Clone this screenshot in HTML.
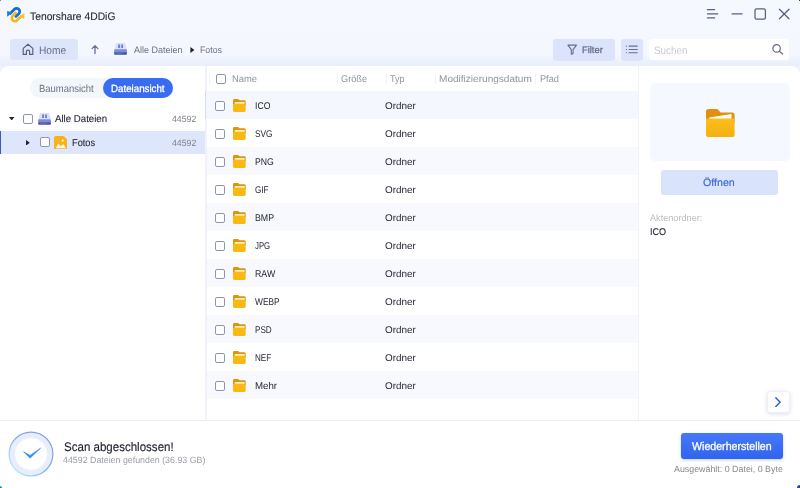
<!DOCTYPE html>
<html><head><meta charset="utf-8">
<style>
*{box-sizing:border-box;margin:0;padding:0}
html,body{width:800px;height:488px;overflow:hidden}
body{background:linear-gradient(#f5f8fe 0,#f4f7fe 54px,#e8eefc 65px,#f0f3fc 67px);font-family:"Liberation Sans",sans-serif;font-size:10px;color:#1f2230;position:relative}
.abs{position:absolute}
.t{position:absolute;white-space:nowrap;line-height:1;transform-origin:0 0;text-rendering:geometricPrecision}
.cb{position:absolute;width:10px;height:10px;border:1.1px solid #8f95b0;border-radius:2px;background:#fff}
#home{left:10px;top:38.7px;width:68px;height:21.6px;background:#dde5fb;border-radius:3px}
#side{left:0;top:65.5px;width:204.5px;height:355.5px;background:#fff;border-top-left-radius:9px}
#main{left:206.5px;top:65.5px;width:593.5px;height:355.5px;background:#fff;border-top-right-radius:9px}
#toggle{left:30px;top:78.3px;width:143.5px;height:19.3px;border-radius:10px;background:#f3f6fd}
#toggle .on{position:absolute;left:73.4px;top:0;width:69.8px;height:19.3px;border-radius:10px;background:#3a6cf2}
#selrow{left:0;top:130.5px;width:204.5px;height:23.5px;background:#dde6fb;border-left:1.5px solid #3d5cb8}
.row{position:absolute;left:206.5px;width:432px;height:28px}
.row.odd{background:#f7f9fe}
#row0{background:#f4f7fe;border-left:1.7px solid #d3ddf8;left:205.4px;width:433.1px}
.sep{position:absolute;top:73.5px;width:1px;height:10.5px;background:#f0f2f7}
#rdiv{left:638px;top:66px;width:1px;height:355px;background:#eff2f9}
#prev{left:650px;top:83px;width:139.5px;height:78px;background:#f5f8fe;border-radius:5px}
#open{left:661px;top:170px;width:117px;height:24.5px;background:#dae3fc;border-radius:3px}
#bottom{left:0;top:420px;width:800px;height:68px;background:#fff;border-top:1px solid #ebedf2}
#restore{left:681px;top:433.4px;width:102.2px;height:25.2px;background:linear-gradient(#4678f8,#3164ee);border-radius:3px;box-shadow:0 1px 3px rgba(59,108,246,.35)}
#filter{left:553px;top:38.5px;width:61.5px;height:22px;background:#dce4fb;border-radius:3px}
#listbtn{left:620.5px;top:38.5px;width:22px;height:22px;background:#dce4fb;border-radius:3px}
#search{left:649px;top:39px;width:140px;height:21px;background:#fff;border-radius:3px}
#nextbtn{left:767px;top:391px;width:22.5px;height:22px;background:#fff;border-radius:3px;border:1px solid #edf0f8;box-shadow:0 1px 4px rgba(100,120,180,.22)}
#app{position:absolute;left:0;top:0;width:800px;height:488px;will-change:transform}
</style></head><body><div id="app">
<svg width="0" height="0" style="position:absolute"><defs>
<g id="fold"><path d="M0 1.3Q0 0 1.3 0H4.8Q5.4 0 5.8 .4L6.6 1.2H11.4Q12.7 1.2 12.7 2.5V6H0Z" fill="#e0930f"/><rect x="1.8" y="3" width="9.8" height="2.2" fill="#fff3b8"/><path d="M0 5.3Q0 4.7 .6 4.7H12.1Q12.7 4.7 12.7 5.3V11.5Q12.7 12.9 11.3 12.9H1.4Q0 12.9 0 11.5Z" fill="#f9b914"/></g>
<g id="drive"><path d="M2.3 0H10.7Q11.2 0 11.35 .5L13 6.6H0L1.65 .5Q1.8 0 2.3 0Z" fill="#dce1f8"/><rect x="4" y="1.5" width="2" height="3.6" fill="#6e80dc"/><rect x="7.1" y="1.5" width="1.9" height="3.6" fill="#6e80dc"/><path d="M0 7.2Q0 6.3 .9 6.3H12.1Q13 6.3 13 7.2V9.6H0Z" fill="#7c8cda"/><path d="M0 9.3H13V11Q13 12 12 12H1Q0 12 0 11Z" fill="#3f4fa2"/><rect x="1.6" y="10.2" width="7" height="0.8" fill="#6474c4"/></g>
</defs></svg>

<!-- title bar -->
<svg class="abs" style="left:4px;top:4px" width="24" height="22" viewBox="4 4 24 22">
<g stroke="#f6b71e" fill="#f9c524" transform="rotate(180 15.75 14.8)"><path d="M10.2 13.5L14.4 9.3A3.1 3.1 0 0 1 18.8 13.7L15.9 16.6" fill="none" stroke-width="2.7" stroke-linecap="round"/><path d="M7.1 10.9V16.8L12.8 12.4Z" stroke="none"/></g>
<g stroke="#0f6fd6" fill="#1585e4"><path d="M10.2 13.5L14.4 9.3A3.1 3.1 0 0 1 18.8 13.7L15.9 16.6" fill="none" stroke-width="2.7" stroke-linecap="round"/><path d="M7.1 10.9V16.8L12.8 12.4Z" stroke="none"/></g>
</svg>
<svg class="abs" style="left:704px;top:6px" width="90" height="16" viewBox="0 0 90 16" fill="none" stroke="#596080" stroke-width="1.25" stroke-linecap="round">
<path d="M3.4 3.6H10.6M3.4 7.75H13.8M3.4 11.9H10.6"/>
<path d="M28 7.75H38"/>
<rect x="51" y="2.8" width="10.4" height="10.4" rx="1.6"/>
<path d="M75.4 3.2L85 12.8M85 3.2L75.4 12.8"/>
</svg>

<!-- toolbar -->
<div class="abs" id="home"></div>
<svg class="abs" style="left:21px;top:43px" width="14" height="13" viewBox="0 0 14 13" fill="none" stroke="#596080" stroke-width="1.2" stroke-linejoin="round"><path d="M2.2 5.4L7 1.2L11.8 5.4V11.4H8.6V8.4Q8.6 7.2 7 7.2Q5.4 7.2 5.4 8.4V11.4H2.2Z"/></svg>
<svg class="abs" style="left:90.2px;top:43.8px" width="10" height="11" viewBox="0 0 10 11" fill="none" stroke="#677096" stroke-width="1.3" stroke-linecap="round" stroke-linejoin="round"><path d="M5 9.6V1.6M2.1 4.6L5 1.6L7.9 4.6"/></svg>
<svg class="abs" style="left:114px;top:43.3px" width="13.1" height="12" viewBox="0 0 13 12.2"><use href="#drive"/></svg>
<svg class="abs" style="left:189.5px;top:47px" width="5" height="6" viewBox="0 0 5 6"><path d="M0.4 0L4.4 3L0.4 6Z" fill="#1f2230"/></svg>
<div class="abs" id="filter"></div>
<svg class="abs" style="left:567.4px;top:44.2px" width="10.4" height="11.2" viewBox="0 0 10.4 11.2" fill="none" stroke="#656d8e" stroke-width="1.1" stroke-linejoin="round"><path d="M0.9 1.1H9.5L6.1 5.6V9.4L4.3 10.3V5.6Z"/></svg>
<div class="abs" id="listbtn"></div>
<svg class="abs" style="left:625px;top:44px" width="14" height="11" viewBox="0 0 14 11" stroke="#656d8e" stroke-width="1.05" stroke-linecap="round"><path d="M4 2.1H12.3M4 5.4H12.3M4 8.7H12.3"/><path d="M1.3 2.1H1.5M1.3 5.4H1.5M1.3 8.7H1.5"/></svg>
<div class="abs" id="search"></div>
<svg class="abs" style="left:771px;top:43px" width="14" height="13" viewBox="0 0 14 13" fill="none" stroke="#656b85" stroke-width="1.2" stroke-linecap="round"><circle cx="5.6" cy="5.4" r="3.7"/><path d="M8.4 8.2L11.6 11"/></svg>

<!-- panels -->
<div class="abs" id="side"></div>
<div class="abs" id="main"></div>
<div class="abs" id="toggle"><div class="on"></div></div>
<svg class="abs" style="left:8.5px;top:117px" width="5.4" height="3.4" viewBox="0 0 5.4 3.4"><path d="M0 0H5.4L2.7 3.4Z" fill="#1f2230"/></svg>
<div class="cb" style="left:23px;top:113.6px"></div>
<svg class="abs" style="left:37.7px;top:112.9px" width="13.1" height="12" viewBox="0 0 13 12.2"><use href="#drive"/></svg>
<div class="abs" id="selrow"></div>
<svg class="abs" style="left:26px;top:139.8px" width="3.8" height="5.6" viewBox="0 0 3.8 5.6"><path d="M0 0L3.8 2.8L0 5.6Z" fill="#1f2230"/></svg>
<div class="cb" style="left:40px;top:137.1px"></div>
<svg class="abs" style="left:54px;top:135.6px" width="13.2" height="13.8" viewBox="0 0 13.2 13.8"><path d="M2 0H9.6L13.2 3.4V11.8Q13.2 13.8 11.2 13.8H2Q0 13.8 0 11.8V2Q0 0 2 0Z" fill="#f8b31c"/><path d="M1.9 12.2L4.3 7.4L6.6 10.2L9.6 8.2L11.8 12.2Z" fill="#fffbe8"/><circle cx="8.7" cy="4.5" r="1.05" fill="#fffbe8"/></svg>

<div class="cb" style="left:216px;top:74px"></div>
<div class="sep" style="left:208.5px"></div><div class="sep" style="left:336.5px"></div><div class="sep" style="left:385.5px"></div><div class="sep" style="left:434.5px"></div><div class="sep" style="left:535px"></div>
<div class="row odd" id="row0" style="top:91px"></div>
<div class="cb" style="left:215px;top:100.7px"></div>
<svg class="abs" style="left:233.2px;top:98.9px" width="12.7" height="12.9" viewBox="0 0 12.7 12.9"><use href="#fold"/></svg>
<div class="t" style="left:254.51px;top:102px;font-size:9.8px;color:#1f2230;transform:scaleX(0.884)">ICO</div>
<div class="t" style="left:384.81px;top:102px;font-size:9.8px;color:#1f2230;transform:scaleX(1.010)">Ordner</div>
<div class="row" style="top:119px"></div>
<div class="cb" style="left:215px;top:128.7px"></div>
<svg class="abs" style="left:233.2px;top:126.9px" width="12.7" height="12.9" viewBox="0 0 12.7 12.9"><use href="#fold"/></svg>
<div class="t" style="left:254.51px;top:130px;font-size:9.8px;color:#1f2230;transform:scaleX(0.846)">SVG</div>
<div class="t" style="left:384.81px;top:130px;font-size:9.8px;color:#1f2230;transform:scaleX(1.010)">Ordner</div>
<div class="row odd" style="top:147px"></div>
<div class="cb" style="left:215px;top:156.7px"></div>
<svg class="abs" style="left:233.2px;top:154.9px" width="12.7" height="12.9" viewBox="0 0 12.7 12.9"><use href="#fold"/></svg>
<div class="t" style="left:254.51px;top:158px;font-size:9.8px;color:#1f2230;transform:scaleX(0.883)">PNG</div>
<div class="t" style="left:384.81px;top:158px;font-size:9.8px;color:#1f2230;transform:scaleX(1.010)">Ordner</div>
<div class="row" style="top:175px"></div>
<div class="cb" style="left:215px;top:184.7px"></div>
<svg class="abs" style="left:233.2px;top:182.9px" width="12.7" height="12.9" viewBox="0 0 12.7 12.9"><use href="#fold"/></svg>
<div class="t" style="left:254.51px;top:186px;font-size:9.8px;color:#1f2230;transform:scaleX(0.827)">GIF</div>
<div class="t" style="left:384.81px;top:186px;font-size:9.8px;color:#1f2230;transform:scaleX(1.010)">Ordner</div>
<div class="row odd" style="top:203px"></div>
<div class="cb" style="left:215px;top:212.7px"></div>
<svg class="abs" style="left:233.2px;top:210.9px" width="12.7" height="12.9" viewBox="0 0 12.7 12.9"><use href="#fold"/></svg>
<div class="t" style="left:254.51px;top:214px;font-size:9.8px;color:#1f2230;transform:scaleX(0.899)">BMP</div>
<div class="t" style="left:384.81px;top:214px;font-size:9.8px;color:#1f2230;transform:scaleX(1.010)">Ordner</div>
<div class="row" style="top:231px"></div>
<div class="cb" style="left:215px;top:240.7px"></div>
<svg class="abs" style="left:233.2px;top:238.9px" width="12.7" height="12.9" viewBox="0 0 12.7 12.9"><use href="#fold"/></svg>
<div class="t" style="left:254.51px;top:242px;font-size:9.8px;color:#1f2230;transform:scaleX(0.798)">JPG</div>
<div class="t" style="left:384.81px;top:242px;font-size:9.8px;color:#1f2230;transform:scaleX(1.010)">Ordner</div>
<div class="row odd" style="top:259px"></div>
<div class="cb" style="left:215px;top:268.7px"></div>
<svg class="abs" style="left:233.2px;top:266.9px" width="12.7" height="12.9" viewBox="0 0 12.7 12.9"><use href="#fold"/></svg>
<div class="t" style="left:254.51px;top:270px;font-size:9.8px;color:#1f2230;transform:scaleX(0.898)">RAW</div>
<div class="t" style="left:384.81px;top:270px;font-size:9.8px;color:#1f2230;transform:scaleX(1.010)">Ordner</div>
<div class="row" style="top:287px"></div>
<div class="cb" style="left:215px;top:296.7px"></div>
<svg class="abs" style="left:233.2px;top:294.9px" width="12.7" height="12.9" viewBox="0 0 12.7 12.9"><use href="#fold"/></svg>
<div class="t" style="left:254.51px;top:298px;font-size:9.8px;color:#1f2230;transform:scaleX(0.852)">WEBP</div>
<div class="t" style="left:384.81px;top:298px;font-size:9.8px;color:#1f2230;transform:scaleX(1.010)">Ordner</div>
<div class="row odd" style="top:315px"></div>
<div class="cb" style="left:215px;top:324.7px"></div>
<svg class="abs" style="left:233.2px;top:322.9px" width="12.7" height="12.9" viewBox="0 0 12.7 12.9"><use href="#fold"/></svg>
<div class="t" style="left:254.51px;top:326px;font-size:9.8px;color:#1f2230;transform:scaleX(0.831)">PSD</div>
<div class="t" style="left:384.81px;top:326px;font-size:9.8px;color:#1f2230;transform:scaleX(1.010)">Ordner</div>
<div class="row" style="top:343px"></div>
<div class="cb" style="left:215px;top:352.7px"></div>
<svg class="abs" style="left:233.2px;top:350.9px" width="12.7" height="12.9" viewBox="0 0 12.7 12.9"><use href="#fold"/></svg>
<div class="t" style="left:254.51px;top:354px;font-size:9.8px;color:#1f2230;transform:scaleX(0.829)">NEF</div>
<div class="t" style="left:384.81px;top:354px;font-size:9.8px;color:#1f2230;transform:scaleX(1.010)">Ordner</div>
<div class="row odd" style="top:371px"></div>
<div class="cb" style="left:215px;top:380.7px"></div>
<svg class="abs" style="left:233.2px;top:378.9px" width="12.7" height="12.9" viewBox="0 0 12.7 12.9"><use href="#fold"/></svg>
<div class="t" style="left:254.51px;top:382px;font-size:9.8px;color:#1f2230;transform:scaleX(0.990)">Mehr</div>
<div class="t" style="left:384.81px;top:382px;font-size:9.8px;color:#1f2230;transform:scaleX(1.010)">Ordner</div>
<div class="abs" id="rdiv"></div>
<div class="abs" id="prev"></div>
<svg class="abs" style="left:706px;top:108.5px" width="28.6" height="28.4" viewBox="0 0 28.6 28.4"><defs><linearGradient id="fg" x1="0" y1="0" x2="0" y2="1"><stop offset="0" stop-color="#fbbe1d"/><stop offset="1" stop-color="#f5b010"/></linearGradient></defs><path d="M0 2.8Q0 0 2.8 0H10.5Q11.6 0 12.4 .9L14.2 3Q14.8 3.5 15.6 3.5H26Q28.6 3.5 28.6 6.1V14H0Z" fill="#e0900e"/><path d="M3.2 8.4L25.5 5.1V10.4H3.2Z" fill="#fffdf6"/><path d="M0 10.6Q0 9.5 1.1 9.5H27.5Q28.6 9.5 28.6 10.6V25.2Q28.6 28.4 25.4 28.4H3.2Q0 28.4 0 25.2Z" fill="url(#fg)"/></svg>
<div class="abs" id="open"></div>
<div class="abs" id="nextbtn"></div>
<svg class="abs" style="left:775.3px;top:396.6px" width="6" height="10.4" viewBox="0 0 6 10.4" fill="none" stroke="#2f5fd0" stroke-width="1.45" stroke-linecap="round" stroke-linejoin="round"><path d="M0.8 0.8L5.1 5.2L0.8 9.6"/></svg>

<!-- bottom -->
<div class="abs" id="bottom"></div>
<svg class="abs" style="left:7.4px;top:429.6px" width="48" height="48" viewBox="0 0 48 48">
<defs><linearGradient id="rg" x1="0.85" y1="0.15" x2="0.15" y2="0.85"><stop offset="0" stop-color="#8a9eea"/><stop offset="0.45" stop-color="#79a6f3"/><stop offset="1" stop-color="#a9e6f2"/></linearGradient></defs>
<circle cx="24" cy="24" r="21.9" fill="#e8edfb" stroke="url(#rg)" stroke-width="1.2"/>
<circle cx="24" cy="24" r="16.2" fill="#fff" stroke="#eef2fd" stroke-width="0.8"/>
<path d="M16.6 21.8L23 28.2L33.6 18.2L23 25.4Z" fill="#3b8cf3" stroke="#3b8cf3" stroke-width="0.7" stroke-linejoin="round"/>
</svg>
<div class="abs" id="restore"></div>
<div class="abs" style="left:0;top:0;width:1px;height:1px;background:#5aa5b5"></div>
<div class="abs" style="left:799px;top:0;width:1px;height:1px;background:#3a4560"></div>
<div class="abs" style="left:0;top:486px;width:2px;height:2px;background:#1d8fa3;border-top-right-radius:2px"></div>
<div class="abs" style="left:796.8px;top:484.8px;width:3.2px;height:3.2px;background:#2448a8;border-top-left-radius:3.2px"></div>
<div class="t" style="left:29.56px;top:12px;font-size:10.9px;color:#1f2230;transform:scaleX(0.947);-webkit-text-stroke:0.1px #1f2230">Tenorshare 4DDiG</div>
<div class="t" style="left:39.26px;top:46px;font-size:11.0px;color:#656c8a;transform:scaleX(0.927)">Home</div>
<div class="t" style="left:134.23px;top:46px;font-size:9.3px;color:#6a7082;transform:scaleX(0.965)">Alle Dateien</div>
<div class="t" style="left:200.03px;top:46px;font-size:9.3px;color:#6a7082;transform:scaleX(0.946)">Fotos</div>
<div class="t" style="left:582.42px;top:46px;font-size:9.5px;color:#626a8a;transform:scaleX(0.985);-webkit-text-stroke:0.25px #626a8a">Filter</div>
<div class="t" style="left:654.32px;top:46px;font-size:10.8px;color:#c8ccd6;transform:scaleX(0.915)">Suchen</div>
<div class="t" style="left:39.33px;top:85px;font-size:10.4px;color:#6b7080;transform:scaleX(0.911)">Baumansicht</div>
<div class="t" style="left:110.98px;top:85px;font-size:10.4px;color:#ffffff;transform:scaleX(0.937);-webkit-text-stroke:0.3px #ffffff">Dateiansicht</div>
<div class="t" style="left:55.00px;top:115px;font-size:10.0px;color:#1f2230;transform:scaleX(0.966);-webkit-text-stroke:0.1px #1f2230">Alle Dateien</div>
<div class="t" style="left:171.64px;top:115px;font-size:9.1px;color:#7d808a;transform:scaleX(0.960)">44592</div>
<div class="t" style="left:72.10px;top:139px;font-size:10.0px;color:#1f2230;transform:scaleX(0.924);-webkit-text-stroke:0.1px #1f2230">Fotos</div>
<div class="t" style="left:171.64px;top:139px;font-size:9.1px;color:#7d808a;transform:scaleX(0.960)">44592</div>
<div class="t" style="left:231.51px;top:75px;font-size:9.8px;color:#92959f;transform:scaleX(0.960)">Name</div>
<div class="t" style="left:340.71px;top:75px;font-size:9.8px;color:#92959f;transform:scaleX(0.936)">Größe</div>
<div class="t" style="left:390.11px;top:75px;font-size:9.8px;color:#92959f;transform:scaleX(0.924)">Typ</div>
<div class="t" style="left:438.61px;top:75px;font-size:9.8px;color:#92959f;transform:scaleX(1.027)">Modifizierungsdatum</div>
<div class="t" style="left:539.61px;top:75px;font-size:9.8px;color:#92959f;transform:scaleX(0.937)">Pfad</div>
<div class="t" style="left:702.88px;top:178px;font-size:10.5px;color:#3a64da;transform:scaleX(1.012);-webkit-text-stroke:0.15px #3a64da">Öffnen</div>
<div class="t" style="left:649.62px;top:213px;font-size:9.4px;color:#b9bcc5;transform:scaleX(0.974)">Aktenordner:</div>
<div class="t" style="left:649.61px;top:228px;font-size:9.8px;color:#1f2230;transform:scaleX(0.924);-webkit-text-stroke:0.1px #1f2230">ICO</div>
<div class="t" style="left:63.50px;top:441px;font-size:12.4px;color:#1f2230;transform:scaleX(0.931);-webkit-text-stroke:0.15px #1f2230">Scan abgeschlossen!</div>
<div class="t" style="left:63.44px;top:456px;font-size:9.1px;color:#9a9da6;transform:scaleX(0.971)">44592 Dateien gefunden (36.93 GB)</div>
<div class="t" style="left:691.95px;top:442px;font-size:11.3px;color:#ffffff;transform:scaleX(0.940);-webkit-text-stroke:0.3px #ffffff">Wiederherstellen</div>
<div class="t" style="left:673.94px;top:465px;font-size:9.1px;color:#85888f;transform:scaleX(0.974)">Ausgewählt: 0 Datei, 0 Byte</div>
</div></body></html>
